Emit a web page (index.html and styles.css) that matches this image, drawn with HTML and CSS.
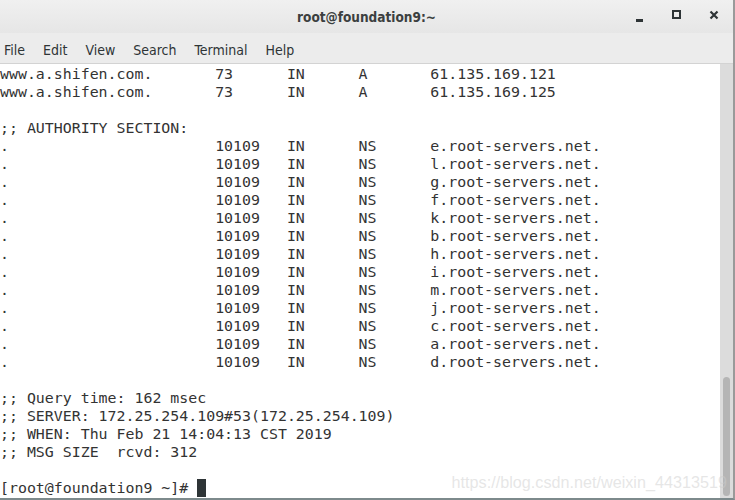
FILE: index.html
```html
<!DOCTYPE html>
<html lang="en">
<head>
  <meta charset="UTF-8">
  <meta name="viewport" content="width=device-width, initial-scale=1.0">
  <title>root@foundation9:~</title>
  <link rel="stylesheet" href="styles.css">
</head>
<body>
  <div class="window">
    <div class="titlebar">
      <span class="title">root@foundation9:~</span>
      <div class="controls">
        <span class="ctl ctl-min"></span>
        <span class="ctl ctl-max"></span>
        <span class="ctl ctl-close">
          <svg width="10" height="10" viewBox="0 0 10 10"><path d="M1.5 1.5 L8.5 8.5 M8.5 1.5 L1.5 8.5" stroke="#2e3436" stroke-width="2.2"/></svg>
        </span>
      </div>
    </div>
    <div class="menubar">
      <span class="menu-item">File</span>
      <span class="menu-item">Edit</span>
      <span class="menu-item">View</span>
      <span class="menu-item">Search</span>
      <span class="menu-item">Terminal</span>
      <span class="menu-item">Help</span>
    </div>
    <div class="content">
<pre class="terminal">www.a.shifen.com.       73      IN      A       61.135.169.121
www.a.shifen.com.       73      IN      A       61.135.169.125

;; AUTHORITY SECTION:
.                       10109   IN      NS      e.root-servers.net.
.                       10109   IN      NS      l.root-servers.net.
.                       10109   IN      NS      g.root-servers.net.
.                       10109   IN      NS      f.root-servers.net.
.                       10109   IN      NS      k.root-servers.net.
.                       10109   IN      NS      b.root-servers.net.
.                       10109   IN      NS      h.root-servers.net.
.                       10109   IN      NS      i.root-servers.net.
.                       10109   IN      NS      m.root-servers.net.
.                       10109   IN      NS      j.root-servers.net.
.                       10109   IN      NS      c.root-servers.net.
.                       10109   IN      NS      a.root-servers.net.
.                       10109   IN      NS      d.root-servers.net.

;; Query time: 162 msec
;; SERVER: 172.25.254.109#53(172.25.254.109)
;; WHEN: Thu Feb 21 14:04:13 CST 2019
;; MSG SIZE  rcvd: 312

[root@foundation9 ~]# <span class="cursor"> </span></pre>
      <div class="scrollbar">
        <div class="thumb"></div>
      </div>
    </div>
    <div class="watermark">https://blog.csdn.net/weixin_44313519</div>
  </div>
</body>
</html>
```

FILE: styles.css
```css
* {
  box-sizing: border-box;
}
html, body {
  margin: 0;
  padding: 0;
  background: #ffffff;
}
.window {
  position: relative;
  width: 735px;
  height: 500px;
  display: flex;
  flex-direction: column;
  overflow: hidden;
  border-right: 2px solid #9a9a9a;
  border-bottom: 2px solid #7d8a8c;
}
.titlebar {
  height: 33px;
  flex: none;
  display: flex;
  align-items: center;
  justify-content: center;
  position: relative;
  background: linear-gradient(#f0f0f0, #e6e6e6);
}
.title {
  font-family: "DejaVu Sans Condensed", "DejaVu Sans", sans-serif;
  font-size: 13.5px;
  font-weight: bold;
  color: #3c3f40;
}
.controls {
  position: absolute;
  right: 14px;
  top: 10px;
  display: flex;
  gap: 28px;
  align-items: center;
}
.ctl {
  width: 10px;
  height: 10px;
  display: block;
  position: relative;
}
.ctl-min::after {
  content: "";
  position: absolute;
  left: 2px;
  bottom: -2px;
  width: 7px;
  height: 3px;
  background: #2e3436;
}
.ctl-max {
  border: 2px solid #2e3436;
  width: 9px;
  height: 9px;
  margin-top: -1px;
}
.ctl-close svg {
  display: block;
}
.menubar {
  height: 31px;
  flex: none;
  display: flex;
  align-items: center;
  padding: 3px 0 0 4px;
  background: #ececec;
  border-bottom: 1px solid #d3d3d3;
  font-family: "DejaVu Sans Condensed", "DejaVu Sans", sans-serif;
  font-size: 14px;
  color: #2e3436;
}
.menu-item {
  margin-right: 18px;
}
.content {
  flex: 1;
  display: flex;
  min-height: 0;
}
.terminal {
  flex: 1;
  margin: 0;
  padding: 1px 0 0 0;
  font-family: "DejaVu Sans Mono", monospace;
  font-size: 14.9px;
  line-height: 18px;
  color: #333333;
  white-space: pre;
  overflow: hidden;
}
.cursor {
  display: inline-block;
  width: 9px;
  height: 18px;
  vertical-align: top;
  background: #2e3436;
}
.scrollbar {
  width: 13px;
  flex: none;
  background: #dcdcdc;
  display: flex;
  flex-direction: column;
  justify-content: flex-end;
  align-items: center;
  padding-bottom: 2px;
}
.thumb {
  width: 7px;
  height: 119px;
  border-radius: 4px;
  background: #b5b5b5;
}
.watermark {
  position: absolute;
  right: 6px;
  bottom: 6px;
  font-family: "Liberation Sans", Arial, sans-serif;
  font-size: 16.2px;
  color: rgba(205, 205, 205, 0.5);
}
```
